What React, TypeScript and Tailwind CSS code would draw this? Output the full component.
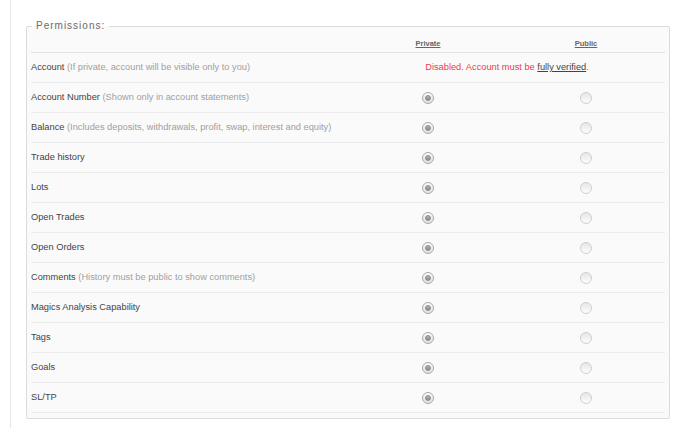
import React from "react";

type Row = {
  label: string;
  note?: string;
  disabled?: boolean;
};

const ROWS: Row[] = [
  { label: "Account", note: "(If private, account will be visible only to you)", disabled: true },
  { label: "Account Number", note: "(Shown only in account statements)" },
  { label: "Balance", note: "(Includes deposits, withdrawals, profit, swap, interest and equity)" },
  { label: "Trade history" },
  { label: "Lots" },
  { label: "Open Trades" },
  { label: "Open Orders" },
  { label: "Comments", note: "(History must be public to show comments)" },
  { label: "Magics Analysis Capability" },
  { label: "Tags" },
  { label: "Goals" },
  { label: "SL/TP" },
];

function Radio({ checked }: { checked: boolean }) {
  if (checked) {
    return (
      <span className="flex h-[12px] w-[12px] items-center justify-center rounded-full border border-[#a9a9a9] bg-gradient-to-b from-[#fbfbfb] to-[#e2e2e2]">
        <span className="h-[6px] w-[6px] rounded-full border border-[#8c8c8c] bg-gradient-to-b from-[#b5b5b5] to-[#8a8a8a]" />
      </span>
    );
  }
  return (
    <span className="h-[12px] w-[12px] rounded-full border border-[#cfcfcf] bg-gradient-to-b from-[#e6e6e6] to-[#fdfdfd]" />
  );
}

export default function App() {
  return (
    <div className="h-[428px] w-[680px] overflow-hidden bg-white font-['Liberation_Sans',Arial,sans-serif]">
      <div className="ml-[10px] h-full border-l border-[#e6e6e6] pl-[15px] pt-[20px]">
        <fieldset className="w-[644px] rounded-[2px] border border-[#dcdcdc] bg-[#fafafa] px-[4px] pb-[5px]">
          <legend className="ml-[1px] px-[4px] text-[10px] leading-[12px] tracking-[1px] text-[#6a6a6a]">
            Permissions:
          </legend>

          {/* header */}
          <div className="flex h-[21px] items-end border-b border-[#e2e2e2] pb-[3px]">
            <div className="w-[318px]" />
            <div className="flex w-[158px] justify-center text-[7.5px] font-bold leading-[10px] text-[#666] underline">
              Private
            </div>
            <div className="flex w-[158px] justify-center text-[7.5px] font-bold leading-[10px] text-[#666] underline">
              Public
            </div>
          </div>

          {ROWS.map((row) => (
            <div key={row.label} className="flex h-[30px] items-center border-b border-[#ececec] text-[9.25px] leading-[11px]">
              <div className="w-[318px] whitespace-nowrap text-[#444]">
                {row.label}
                {row.note ? <span className="text-[#a0a0a0]"> {row.note}</span> : null}
              </div>
              {row.disabled ? (
                <div className="flex w-[316px] justify-center whitespace-nowrap text-[#ee3b4a]">
                  Disabled. Account must be&nbsp;
                  <span className="text-[#444] underline">fully verified</span>.
                </div>
              ) : (
                <>
                  <div className="flex w-[158px] justify-center">
                    <Radio checked />
                  </div>
                  <div className="flex w-[158px] justify-center">
                    <Radio checked={false} />
                  </div>
                </>
              )}
            </div>
          ))}
        </fieldset>
      </div>
    </div>
  );
}
